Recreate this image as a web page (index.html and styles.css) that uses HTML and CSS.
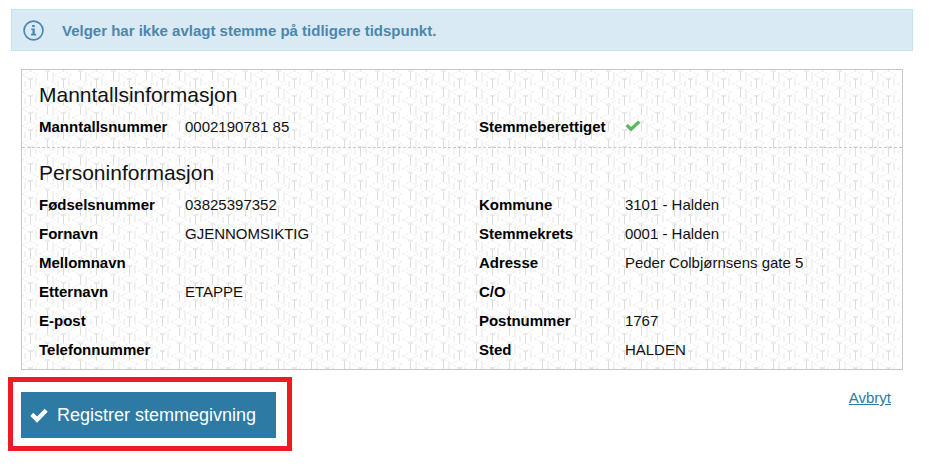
FILE: index.html
```html
<!DOCTYPE html>
<html lang="no">
<head>
    <meta charset="UTF-8">
    <meta name="viewport" content="width=device-width, initial-scale=1.0">
    <title>Registrer stemmegivning</title>
    <link rel="stylesheet" href="styles.css">
</head>
<body>
<div class="alert" role="status">
    <svg class="alert-icon" viewBox="0 0 20 20" aria-hidden="true">
        <circle cx="10" cy="10" r="9" fill="none" stroke="currentColor" stroke-width="1.6"/>
        <path d="M8.7 4.7h2.5v2H8.7zM7.8 8h3.4v5.2h1.3v1.5H7.6v-1.5H9V9.5H7.8z" fill="currentColor"/>
    </svg>
    <span>Velger har ikke avlagt stemme på tidligere tidspunkt.</span>
</div>
<main>
    <div class="card">
        <section class="card-section">
            <h2>Manntallsinformasjon</h2>
            <div class="columns">
                <dl>
                    <dt>Manntallsnummer</dt><dd>0002190781 85</dd>
                </dl>
                <dl>
                    <dt>Stemmeberettiget</dt>
                    <dd>
                        <svg class="check" viewBox="0 0 16 12" role="img" aria-label="Ja">
                            <path d="M.5 6.3 2.9 4l3.2 3L13 .5l2.4 2.3L6.1 11.6z" fill="currentColor"/>
                        </svg>
                    </dd>
                </dl>
            </div>
        </section>
        <section class="card-section">
            <h2>Personinformasjon</h2>
            <div class="columns">
                <dl>
                    <dt>Fødselsnummer</dt><dd>03825397352</dd>
                    <dt>Fornavn</dt><dd>GJENNOMSIKTIG</dd>
                    <dt>Mellomnavn</dt><dd></dd>
                    <dt>Etternavn</dt><dd>ETAPPE</dd>
                    <dt>E-post</dt><dd></dd>
                    <dt>Telefonnummer</dt><dd></dd>
                </dl>
                <dl>
                    <dt>Kommune</dt><dd>3101 - Halden</dd>
                    <dt>Stemmekrets</dt><dd>0001 - Halden</dd>
                    <dt>Adresse</dt><dd>Peder Colbjørnsens gate 5</dd>
                    <dt>C/O</dt><dd></dd>
                    <dt>Postnummer</dt><dd>1767</dd>
                    <dt>Sted</dt><dd>HALDEN</dd>
                </dl>
            </div>
        </section>
    </div>
</main>
<div class="actions">
    <div class="highlight">
        <button type="button" class="btn-primary">
            <svg class="btn-icon" viewBox="0 0 18 15" aria-hidden="true">
                <path d="M.3 8 3.2 4.8l3.9 3.6L14.6.7l3.1 3L7.1 14.7z" fill="currentColor"/>
            </svg>
            Registrer stemmegivning
        </button>
    </div>
    <a href="#" class="cancel">Avbryt</a>
</div>
</body>
</html>
```
FILE: styles.css
```css
* {
    box-sizing: border-box;
}

body {
    margin: 0;
    padding: 9px 23px 16px 8px;
    background: #fff;
    color: #111;
    font-family: "Liberation Sans", Arial, sans-serif;
    font-size: 15px;
}

.alert {
    display: flex;
    align-items: center;
    gap: 18px;
    height: 42px;
    margin-left: 3px;
    padding: 0 11px;
    background: #d9eaf5;
    border: 1px solid #bfe5ee;
    color: #4b87ad;
    font-weight: bold;
}

.alert-icon {
    width: 21px;
    height: 21px;
}

.card {
    margin: 18px 10px 0 13px;
    border: 1px solid #c8c8c8;
    background: #fff url("data:image/svg+xml,%3Csvg xmlns='http://www.w3.org/2000/svg' width='33' height='17'%3E%3Cg fill='none' stroke='%23efefef'%3E%3Cpath stroke-dasharray='3 1' d='M0 5l8-4 9 4-9 4zM17 14l8-4 8 4M17 14l8 3 8-3'/%3E%3Cpath stroke='%23f2f2f2' stroke-width='2' d='M14 8v8M3 11v6M31 2v10'/%3E%3Cpath stroke='%23dcdcdc' d='M8.500 9v8M8.500 0v1M25.500 2v8M6 9h5M23 1h5'/%3E%3C/g%3E%3C/svg%3E");
}

.card-section {
    padding: 11px 17px 5px;
}

.card-section + .card-section {
    padding-bottom: 4px;
    border-top: 1px dashed #c8c8c8;
}

h2 {
    margin: 0 0 4px;
    font-size: 21px;
    font-weight: normal;
    line-height: 28px;
}

.columns {
    display: grid;
    grid-template-columns: 52% 48%;
}

dl {
    display: grid;
    grid-template-columns: 146px 1fr;
    grid-auto-rows: 29px;
    margin: 0;
    line-height: 28px;
}

dt {
    color: #000;
    font-weight: bold;
}

dd {
    margin: 0;
}

.check {
    width: 16px;
    height: 12px;
    color: #5cb85c;
}

.actions {
    display: flex;
    justify-content: space-between;
    align-items: flex-start;
    margin-top: 7px;
}

.highlight {
    padding: 10px 11px 8px 8px;
    border: 5px solid #ed1c24;
}

.btn-primary {
    display: flex;
    align-items: center;
    gap: 9px;
    height: 46px;
    padding: 0 20px 0 9px;
    border: 0;
    background: #2d7aa5;
    color: #fff;
    font-family: inherit;
    font-size: 18px;
    cursor: pointer;
}

.btn-icon {
    width: 18px;
    height: 15px;
}

.cancel {
    margin: 12px 22px 0 0;
    color: #2d7aa5;
}
```
